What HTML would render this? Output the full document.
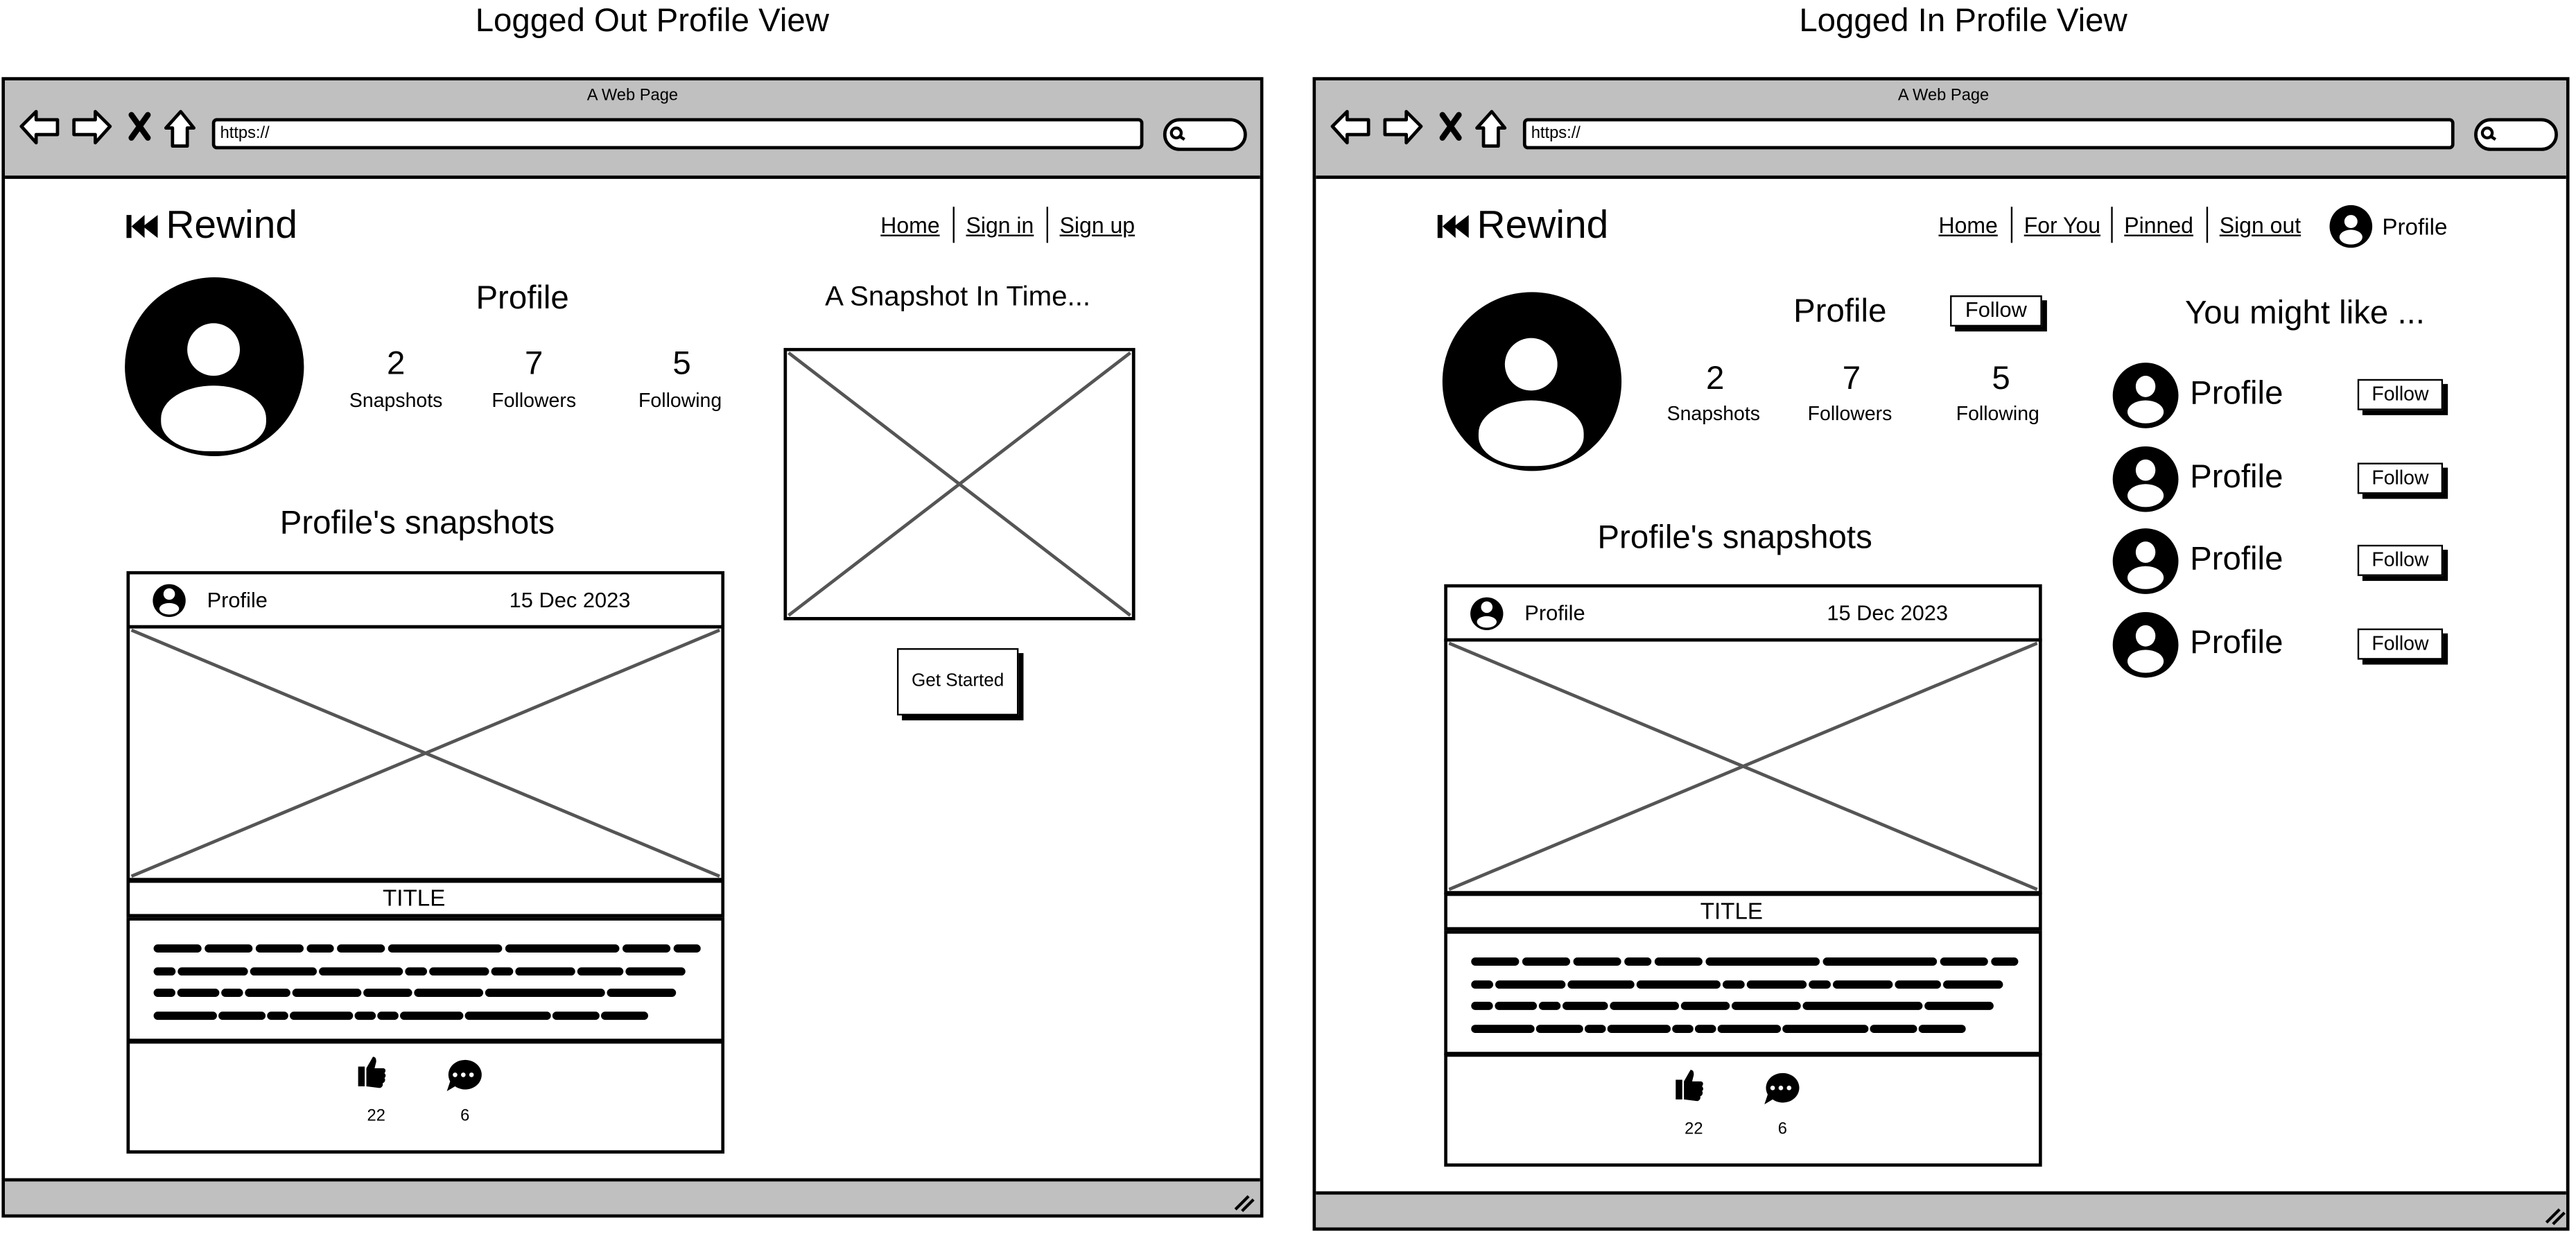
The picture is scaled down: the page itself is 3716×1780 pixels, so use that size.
<!DOCTYPE html>
<html><head><meta charset="utf-8">
<style>
*{margin:0;padding:0;box-sizing:border-box}
html,body{width:3716px;height:1780px;overflow:hidden;background:#fff}
#w{position:absolute;left:0;top:0;width:1568px;height:752px;transform:scale(2.3699,2.367);transform-origin:0 0;font-family:"Liberation Sans",sans-serif;color:#000}
.a{position:absolute}
.t{position:absolute;white-space:nowrap;line-height:1}
.c{transform:translateX(-50%)}
.brow{position:absolute;border:2px solid #000;background:#fff}
.bar{position:absolute;left:0;right:0;background:#c0c0c0}
.circ{position:absolute;border-radius:50%;background:#000;overflow:hidden}
.circ i{position:absolute;background:#fff;border-radius:50%}
.nav{font-size:13.5px;text-decoration:underline}
.sep{position:absolute;width:1.2px;background:#000}
.btn{position:absolute;border:1.5px solid #000;background:#fff;box-shadow:3px 3px 0 #000;font-size:12px;text-align:center}
</style></head><body><div id="w">

<div class="t c" style="left:397px;top:3px;font-size:20px">Logged Out Profile View</div>
<div class="t c" style="left:1195px;top:3px;font-size:20px">Logged In Profile View</div>

<div class="brow" style="left:1px;top:47px;width:768px;height:695px">
 <div class="bar" style="top:0;height:60px;border-bottom:2px solid #000"></div>
 <div class="bar" style="bottom:0;height:22px;border-top:2px solid #000"></div>
</div>
<div class="brow" style="left:799px;top:47px;width:765px;height:703px">
 <div class="bar" style="top:0;height:60px;border-bottom:2px solid #000"></div>
 <div class="bar" style="bottom:0;height:22px;border-top:2px solid #000"></div>
</div>

<div class="t c" style="left:385px;top:54px;font-size:10px">A Web Page</div>
<div class="t c" style="left:1183px;top:54px;font-size:10px">A Web Page</div>
<svg class="a" style="left:0;top:0" width="1568" height="752">
 <g fill="#fff" stroke="#000" stroke-width="2" stroke-linejoin="round">
  <path d="M13 77 L22 68 L22 73 L35 73 L35 82 L22 82 L22 87 Z"/>
  <path d="M67 77 L58 68 L58 73 L45 73 L45 82 L58 82 L58 87 Z"/>
  <path d="M110 68 L101 78 L105 78 L105 89 L114 89 L114 78 L118 78 Z"/>
  <path d="M811 77 L820 68 L820 73 L833 73 L833 82 L820 82 L820 87 Z"/>
  <path d="M865 77 L856 68 L856 73 L843 73 L843 82 L856 82 L856 87 Z"/>
  <path d="M908 68 L899 78 L903 78 L903 89 L912 89 L912 78 L916 78 Z"/>
  <rect x="130" y="73" width="565" height="17" rx="2"/>
  <rect x="709" y="73" width="49" height="18" rx="9"/>
  <rect x="928" y="73" width="565" height="17" rx="2"/>
  <rect x="1507" y="73" width="49" height="18" rx="9"/>
 </g>
 <g stroke="#000" stroke-width="3.5" stroke-linecap="round">
  <path d="M80 70 L90 84 M90 70 L80 84"/>
  <path d="M878 70 L888 84 M888 70 L878 84"/>
 </g>
 <g fill="none" stroke="#000" stroke-width="1.8">
  <circle cx="716" cy="81" r="3"/><path d="M718 83 L721 85"/>
  <circle cx="1514" cy="81" r="3"/><path d="M1516 83 L1519 85"/>
  <path d="M752 737 L760 729 M756 738 L763 731"/>
  <path d="M1550 745 L1558 737 M1554 746 L1561 739"/>
 </g>
</svg>
<div class="t" style="left:134px;top:77px;font-size:10px">https://</div>
<div class="t" style="left:932px;top:77px;font-size:10px">https://</div>

<svg class="a" style="left:77px;top:130px" width="22" height="16"><path d="M0 1h3v14H0zM3 8 L11 1 V15Z M10 8 L19 1 V15Z" fill="#000"/></svg>
<div class="t" style="left:101px;top:126px;font-size:24px">Rewind</div>
<div class="t nav" style="left:536px;top:131px">Home</div>
<div class="sep" style="left:580px;top:126px;height:22px"></div>
<div class="t nav" style="left:588px;top:131px">Sign in</div>
<div class="sep" style="left:637px;top:126px;height:22px"></div>
<div class="t nav" style="left:645px;top:131px">Sign up</div>

<div class="circ" style="left:76px;top:169px;width:109px;height:109px"><i style="left:38px;top:28px;width:32px;height:32px"></i><i style="left:22px;top:66px;width:64px;height:40px;border-radius:50% 50% 45% 45%"></i></div>
<div class="t c" style="left:318px;top:172px;font-size:20px">Profile</div>
<div class="t c" style="left:241px;top:212px;font-size:20px">2</div>
<div class="t c" style="left:325px;top:212px;font-size:20px">7</div>
<div class="t c" style="left:415px;top:212px;font-size:20px">5</div>
<div class="t c" style="left:241px;top:238px;font-size:12px">Snapshots</div>
<div class="t c" style="left:325px;top:238px;font-size:12px">Followers</div>
<div class="t c" style="left:414px;top:238px;font-size:12px">Following</div>

<div class="t c" style="left:583px;top:172px;font-size:17px">A Snapshot In Time...</div>
<svg class="a" style="left:477px;top:212px" width="215" height="167"><rect x="1" y="1" width="212" height="164" fill="#fff" stroke="#000" stroke-width="2"/><path d="M3 3 L211 163 M211 3 L3 163" stroke="#555" stroke-width="2"/></svg>
<div class="btn" style="left:546px;top:395px;width:74px;height:41px;line-height:39px;font-size:11px">Get Started</div>

<div class="t c" style="left:254px;top:309px;font-size:20px">Profile's snapshots</div>

<div class="a" style="left:77px;top:348px;width:364px;height:355px">
 <svg width="364" height="355" style="position:absolute;left:0;top:0">
  <g fill="#fff" stroke="#000" stroke-width="2">
   <rect x="1" y="1" width="362" height="33"/>
   <rect x="1" y="34" width="362" height="154"/>
   <rect x="1" y="189" width="362" height="21"/>
   <rect x="1" y="212" width="362" height="74"/>
   <rect x="1" y="287" width="362" height="67"/>
  </g>
  <path d="M3 36 L361 186 M361 36 L3 186" stroke="#555" stroke-width="2"/>
  <g stroke="#000" stroke-width="5" stroke-linecap="round" fill="none">
   <path d="M19 230 H347" pathLength="285" stroke-dasharray="21 6 21 6 21 6 10 6 21 6 56 6 56 6 21 6 10 60"/>
   <path d="M19 244 H344" pathLength="310" stroke-dasharray="8 6 36 6 34 6 44 6 8 6 30 6 8 6 30 6 22 6 30 60"/>
   <path d="M19 257 H332" pathLength="304" stroke-dasharray="8 6 20 6 8 6 22 6 36 6 24 6 36 6 66 6 36 60"/>
   <path d="M19 271 H317" pathLength="302" stroke-dasharray="34 6 24 6 8 6 34 6 8 6 8 6 34 6 48 6 24 6 24 60"/>
  </g>
  <circle cx="26" cy="18" r="10" fill="#000"/><circle cx="26" cy="14" r="3.5" fill="#fff"/><ellipse cx="26" cy="23" rx="6" ry="3.5" fill="#fff"/>
  <path d="M141 302h4v12h-4zM146 314 v-11 l4-7 c2 0 2 2 2 3 l-1 4 h5 c2 0 2 2 1 3 c1 1 1 2 0 3 c1 1 0 3-1 3 v1 c0 1-1 2-2 2z" fill="#000"/>
  <path d="M205 298 a10 9 0 1 1 -5 16 l-5 3 l2 -6 a10 9 0 0 1 8 -13z" fill="#000"/>
  <circle cx="200" cy="307" r="1.4" fill="#fff"/><circle cx="205" cy="307" r="1.4" fill="#fff"/><circle cx="210" cy="307" r="1.4" fill="#fff"/>
 </svg>
 <div class="t" style="left:49px;top:11px;font-size:13px">Profile</div>
 <div class="t" style="left:233px;top:11px;font-size:13px">15 Dec 2023</div>
 <div class="t c" style="left:175px;top:192px;font-size:14px">TITLE</div>
 <div class="t c" style="left:152px;top:328px;font-size:10px">22</div>
 <div class="t c" style="left:206px;top:328px;font-size:10px">6</div>
</div>

<svg class="a" style="left:875px;top:130px" width="22" height="16"><path d="M0 1h3v14H0zM3 8 L11 1 V15Z M10 8 L19 1 V15Z" fill="#000"/></svg>
<div class="t" style="left:899px;top:126px;font-size:24px">Rewind</div>
<div class="t nav" style="left:1180px;top:131px">Home</div>
<div class="sep" style="left:1224px;top:126px;height:22px"></div>
<div class="t nav" style="left:1232px;top:131px">For You</div>
<div class="sep" style="left:1285px;top:126px;height:22px"></div>
<div class="t nav" style="left:1293px;top:131px">Pinned</div>
<div class="sep" style="left:1343px;top:126px;height:22px"></div>
<div class="t nav" style="left:1351px;top:131px">Sign out</div>
<div class="circ" style="left:1418px;top:125px;width:26px;height:26px"><i style="left:9px;top:6px;width:8px;height:8px"></i><i style="left:6px;top:15px;width:14px;height:9px"></i></div>
<div class="t" style="left:1450px;top:131px;font-size:14px">Profile</div>

<div class="circ" style="left:878px;top:178px;width:109px;height:109px"><i style="left:38px;top:28px;width:32px;height:32px"></i><i style="left:22px;top:66px;width:64px;height:40px;border-radius:50% 50% 45% 45%"></i></div>
<div class="t c" style="left:1120px;top:180px;font-size:20px">Profile</div>
<div class="btn" style="left:1187px;top:180px;width:56px;height:19px;line-height:16px;font-size:13px">Follow</div>
<div class="t c" style="left:1044px;top:221px;font-size:20px">2</div>
<div class="t c" style="left:1127px;top:221px;font-size:20px">7</div>
<div class="t c" style="left:1218px;top:221px;font-size:20px">5</div>
<div class="t c" style="left:1043px;top:246px;font-size:12px">Snapshots</div>
<div class="t c" style="left:1126px;top:246px;font-size:12px">Followers</div>
<div class="t c" style="left:1216px;top:246px;font-size:12px">Following</div>

<div class="t c" style="left:1403px;top:181px;font-size:20px">You might like ...</div>
<div class="circ" style="left:1286px;top:221px;width:40px;height:40px"><i style="left:14px;top:8px;width:12px;height:13px"></i><i style="left:9px;top:23px;width:22px;height:14px"></i></div>
<div class="t" style="left:1333px;top:230px;font-size:20px">Profile</div>
<div class="btn" style="left:1435px;top:231px;width:52px;height:19px;line-height:16px">Follow</div>
<div class="circ" style="left:1286px;top:272px;width:40px;height:40px"><i style="left:14px;top:8px;width:12px;height:13px"></i><i style="left:9px;top:23px;width:22px;height:14px"></i></div>
<div class="t" style="left:1333px;top:281px;font-size:20px">Profile</div>
<div class="btn" style="left:1435px;top:282px;width:52px;height:19px;line-height:16px">Follow</div>
<div class="circ" style="left:1286px;top:322px;width:40px;height:40px"><i style="left:14px;top:8px;width:12px;height:13px"></i><i style="left:9px;top:23px;width:22px;height:14px"></i></div>
<div class="t" style="left:1333px;top:331px;font-size:20px">Profile</div>
<div class="btn" style="left:1435px;top:332px;width:52px;height:19px;line-height:16px">Follow</div>
<div class="circ" style="left:1286px;top:373px;width:40px;height:40px"><i style="left:14px;top:8px;width:12px;height:13px"></i><i style="left:9px;top:23px;width:22px;height:14px"></i></div>
<div class="t" style="left:1333px;top:382px;font-size:20px">Profile</div>
<div class="btn" style="left:1435px;top:383px;width:52px;height:19px;line-height:16px">Follow</div>

<div class="t c" style="left:1056px;top:318px;font-size:20px">Profile's snapshots</div>

<div class="a" style="left:879px;top:356px;width:364px;height:355px">
 <svg width="364" height="355" style="position:absolute;left:0;top:0">
  <g fill="#fff" stroke="#000" stroke-width="2">
   <rect x="1" y="1" width="362" height="33"/>
   <rect x="1" y="34" width="362" height="154"/>
   <rect x="1" y="189" width="362" height="21"/>
   <rect x="1" y="212" width="362" height="74"/>
   <rect x="1" y="287" width="362" height="67"/>
  </g>
  <path d="M3 36 L361 186 M361 36 L3 186" stroke="#555" stroke-width="2"/>
  <g stroke="#000" stroke-width="5" stroke-linecap="round" fill="none">
   <path d="M19 230 H347" pathLength="285" stroke-dasharray="21 6 21 6 21 6 10 6 21 6 56 6 56 6 21 6 10 60"/>
   <path d="M19 244 H344" pathLength="310" stroke-dasharray="8 6 36 6 34 6 44 6 8 6 30 6 8 6 30 6 22 6 30 60"/>
   <path d="M19 257 H332" pathLength="304" stroke-dasharray="8 6 20 6 8 6 22 6 36 6 24 6 36 6 66 6 36 60"/>
   <path d="M19 271 H317" pathLength="302" stroke-dasharray="34 6 24 6 8 6 34 6 8 6 8 6 34 6 48 6 24 6 24 60"/>
  </g>
  <circle cx="26" cy="18" r="10" fill="#000"/><circle cx="26" cy="14" r="3.5" fill="#fff"/><ellipse cx="26" cy="23" rx="6" ry="3.5" fill="#fff"/>
  <path d="M141 302h4v12h-4zM146 314 v-11 l4-7 c2 0 2 2 2 3 l-1 4 h5 c2 0 2 2 1 3 c1 1 1 2 0 3 c1 1 0 3-1 3 v1 c0 1-1 2-2 2z" fill="#000"/>
  <path d="M205 298 a10 9 0 1 1 -5 16 l-5 3 l2 -6 a10 9 0 0 1 8 -13z" fill="#000"/>
  <circle cx="200" cy="307" r="1.4" fill="#fff"/><circle cx="205" cy="307" r="1.4" fill="#fff"/><circle cx="210" cy="307" r="1.4" fill="#fff"/>
 </svg>
 <div class="t" style="left:49px;top:11px;font-size:13px">Profile</div>
 <div class="t" style="left:233px;top:11px;font-size:13px">15 Dec 2023</div>
 <div class="t c" style="left:175px;top:192px;font-size:14px">TITLE</div>
 <div class="t c" style="left:152px;top:328px;font-size:10px">22</div>
 <div class="t c" style="left:206px;top:328px;font-size:10px">6</div>
</div>

</div></body></html>
